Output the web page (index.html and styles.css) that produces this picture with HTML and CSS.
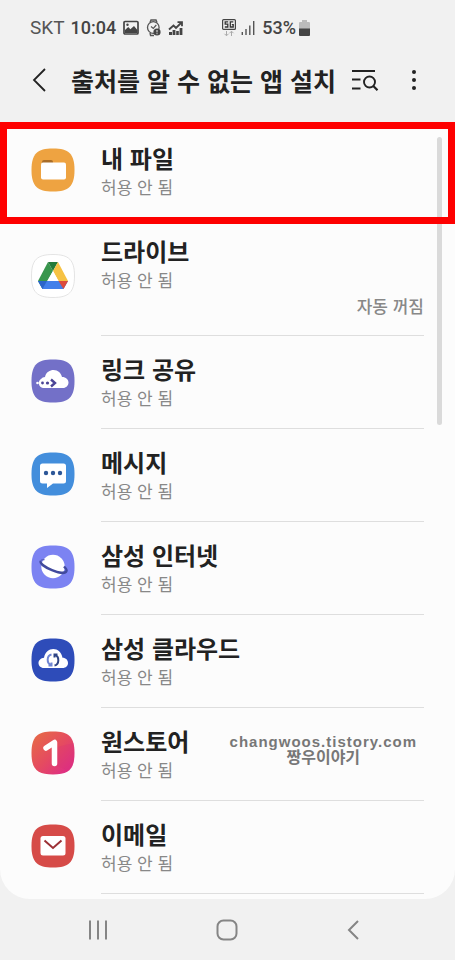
FILE: index.html
```html
<!DOCTYPE html>
<html lang="ko">
<head>
<meta charset="utf-8">
<meta name="viewport" content="width=device-width, initial-scale=1">
<title>출처를 알 수 없는 앱 설치</title>
<link rel="stylesheet" href="styles.css">
</head>
<body>
<div class="status">
  <span class="carrier">SKT</span>
  <span class="clock">10:04</span>
  <svg class="picture" width="16" height="16" viewBox="0 0 16 16"><rect x="1" y="1.5" width="14" height="12.5" rx="1" fill="none" stroke="#444" stroke-width="1.7"/><path d="M2 12V10l3.2-3 2.2 2.2L11 6l3.4 4v3H2z" fill="#444"/><circle cx="4.5" cy="4.7" r="1.2" fill="#444"/></svg>
  <svg class="watch" width="15" height="18" viewBox="0 0 15 18"><path d="M4 3.5 5 1h5l1 2.5M4 14l.6 2.5H8" fill="none" stroke="#555" stroke-width="1.4"/><circle cx="7.3" cy="8.5" r="5.8" fill="none" stroke="#555" stroke-width="1.3"/><path d="m5 7.5 2.3 2 3-3.5" fill="none" stroke="#555" stroke-width="1.2"/><circle cx="11" cy="13" r="3.6" fill="#444"/><path d="M11 11v2.4M11 14.2v1" stroke="#eee" stroke-width="1"/></svg>
  <svg class="chart" width="15" height="16" viewBox="0 0 15 16"><path d="M1 12h3v3H1zM4.6 10h2.8v5H4.6zM8.2 11h2.6v4H8.2zM11.6 8h2.8v7h-2.8z" fill="#444"/><path d="M1 9.5 5.5 5.5 8 8l5-5M9.5 2.2H14v4" fill="none" stroke="#444" stroke-width="1.8"/></svg>
  <svg class="network" width="14" height="18" viewBox="0 0 14 18"><rect x="0.600" y="0.600" width="12.800" height="9.800" rx="1" fill="#f1f1f1" stroke="#444" stroke-width="1.200"/><path d="M6.200 2.800H3.200v2.300h2.600v2.900H2.800M11.300 2.800H8.300V8h2.900V5.700H9.800" fill="none" stroke="#333" stroke-width="1.300"/><path d="M4.500 12v4.600m-2-1.800 2 2 2-2M9.500 17v-4.600m-2 1.800 2-2 2 2" fill="none" stroke="#aaa" stroke-width="1"/></svg>
  <svg class="signal" width="14" height="16" viewBox="0 0 14 16"><path d="M1.300 12v3M5 9v6M8.800 5.500V15M12.700 1v14" stroke="#555" stroke-width="1.400"/></svg>
  <span class="percent">53%</span>
  <svg class="battery" width="11" height="16" viewBox="0 0 11 16"><path d="M3 0h5v2h2q1 0 1 1v6H0V3q0-1 1-1h2z" fill="#bbb"/><path d="M0 8.500h11V15q0 1-1 1H1q-1 0-1-1z" fill="#444"/></svg>
</div>
<header class="bar">
  <button class="icon-button back" aria-label="뒤로"><svg width="16" height="26" viewBox="0 0 16 26"><path d="M13 2 2 13l11 11" fill="none" stroke="#222" stroke-width="1.800"/></svg></button>
  <h1>출처를 알 수 없는 앱 설치</h1>
  <button class="icon-button search" aria-label="검색"><svg width="28" height="22" viewBox="0 0 28 22"><path d="M1 2h23M1 10.500h8.500M1 19.500h8.500" stroke="#222" stroke-width="1.900"/><circle cx="18.500" cy="13" r="5.500" fill="none" stroke="#222" stroke-width="1.900"/><path d="m22.300 17 4.200 4.200" stroke="#222" stroke-width="2.200"/></svg></button>
  <button class="icon-button more" aria-label="옵션 더보기"><svg width="6" height="22" viewBox="0 0 6 22"><g fill="#222"><circle cx="3" cy="3" r="2"/><circle cx="3" cy="11" r="2"/><circle cx="3" cy="19" r="2"/></g></svg></button>
</header>
<main class="panel">
  <ul class="apps">
    <li class="highlight"><a class="app" href="#files">
      <svg class="app-icon" viewBox="0 0 44 44"><path fill="#eea341" d="M22 .5C38 .5 43.500 6 43.500 22S38 43.500 22 43.500.5 38 .5 22 6 .5 22 .5z"/><path d="M11 16v-2q0-2 2-2h7q2 0 2 2v2z" fill="#a96d28"/><rect x="10" y="14.500" width="25" height="17" rx="2" fill="#fff"/></svg>
      <span class="text"><span class="name">내 파일</span><span class="state">허용 안 됨</span></span></a></li>
    <li><a class="app" href="#drive">
      <svg class="app-icon" viewBox="0 0 44 44"><path fill="#fff" stroke="#ddd" stroke-width=".8" d="M22 .5C38 .5 43.500 6 43.500 22S38 43.500 22 43.500.5 38 .5 22 6 .5 22 .5z"/><path d="m17 8 5 9-10.500 18L7 27z" fill="#38964d"/><path d="M17 8h10l-5 9z" fill="#237a39"/><path d="M27 8 37 27H27.500L22 17z" fill="#f6c243"/><path d="M7 27h30l-4.500 8h-21z" fill="#4280ea"/><path d="M7 27h9l-4.500 8z" fill="#2c66c9"/><path d="M27.500 27H37l-4.500 8z" fill="#dc4b3d"/><path d="m22 17 5.500 10h-11z" fill="#fff"/></svg>
      <span class="text"><span class="name">드라이브</span><span class="state">허용 안 됨</span><span class="note">자동 꺼짐</span></span></a></li>
    <li><a class="app" href="#link">
      <svg class="app-icon" viewBox="0 0 44 44"><path fill="#7370c8" d="M22 .5C38 .5 43.500 6 43.500 22S38 43.500 22 43.500.5 38 .5 22 6 .5 22 .5z"/><path d="M12 29a5 5 0 0 1-2-9 5 5 0 0 1 4-2C15 13 19 11 22.500 11c4.500 0 7.500 3 8.500 7 4 0 6.500 2.500 6.500 5.500S35 29 32 29z" fill="#fff"/><circle cx="6.500" cy="24" r="1.300" fill="#fff"/><g fill="#4a4496"><circle cx="11.500" cy="24" r="1.400"/><circle cx="16.500" cy="24" r="1.600"/></g><path d="m20 20.500 4 3.500-4 3.500" fill="none" stroke="#4a4496" stroke-width="2.400"/></svg>
      <span class="text"><span class="name">링크 공유</span><span class="state">허용 안 됨</span></span></a></li>
    <li><a class="app" href="#messages">
      <svg class="app-icon" viewBox="0 0 44 44"><path fill="#438edc" d="M22 .5C38 .5 43.500 6 43.500 22S38 43.500 22 43.500.5 38 .5 22 6 .5 22 .5z"/><path d="M11.500 11.500h21q2.500 0 2.500 2.500v15q0 2.500-2.500 2.500H22L16 36v-4.500h-4.500Q9 31.500 9 29V14q0-2.500 2.500-2.500z" fill="#fff"/><g fill="#2d5798"><circle cx="15" cy="21" r="2.200"/><circle cx="22" cy="21" r="2.200"/><circle cx="29" cy="21" r="2.200"/></g></svg>
      <span class="text"><span class="name">메시지</span><span class="state">허용 안 됨</span></span></a></li>
    <li><a class="app" href="#internet">
      <svg class="app-icon" viewBox="0 0 44 44"><path fill="#7c83f2" d="M22 .5C38 .5 43.500 6 43.500 22S38 43.500 22 43.500.5 38 .5 22 6 .5 22 .5z"/><circle cx="22" cy="21.500" r="11.700" fill="#fff"/><path d="M9.500 16C8 21 33 32 35.500 26c.5-1-1-3-2.500-4.500" fill="none" stroke="#414a9d" stroke-width="2.400"/><path d="M9.500 16c.5-1 2-1.500 4-1.500" fill="none" stroke="#5b62bd" stroke-width="1.300"/></svg>
      <span class="text"><span class="name">삼성 인터넷</span><span class="state">허용 안 됨</span></span></a></li>
    <li><a class="app" href="#cloud">
      <svg class="app-icon" viewBox="0 0 44 44"><path fill="#2e4cb9" d="M22 .5C38 .5 43.500 6 43.500 22S38 43.500 22 43.500.5 38 .5 22 6 .5 22 .5z"/><path d="M13 30c-3.500 0-5.500-2.500-5.500-5 0-3 2.500-5 5.500-5.300C14 14 18 11 22.300 11S30.500 14 31.500 19.700c3.500 0 5.500 2.500 5.500 5.300s-2 5-5.500 5z" fill="#fff"/><path d="M20.500 16.500c-5 1-5 9-.5 10.500m-2.500.5h3v-3" fill="none" stroke="#6f85d3" stroke-width="2"/><path d="M23.500 27.500c5-1 5-9 .5-10.500m2.500-.5h-3v3" fill="none" stroke="#2e4485" stroke-width="2"/></svg>
      <span class="text"><span class="name">삼성 클라우드</span><span class="state">허용 안 됨</span></span></a></li>
    <li><a class="app" href="#onestore">
      <svg class="app-icon" viewBox="0 0 44 44"><defs><linearGradient id="store" x1="0" y1="0" x2="1" y2="1"><stop offset=".15" stop-color="#e6644c"/><stop offset=".5" stop-color="#e54b60"/><stop offset=".85" stop-color="#df3181"/></linearGradient></defs><path fill="url(#store)" d="M22 .5C38 .5 43.500 6 43.500 22S38 43.500 22 43.500.5 38 .5 22 6 .5 22 .5z"/><path d="M26 16 43 12v15q0 8-5 13L24 34z" fill="#d92f78" opacity=".25"/><path d="m15 17 8.500-5.500v21" fill="none" stroke="#fff" stroke-width="5.500" stroke-linecap="round" stroke-linejoin="round"/></svg>
      <span class="text"><span class="name">원스토어</span><span class="state">허용 안 됨</span></span></a>
      <p class="stamp"><span class="site">changwoos.tistory.com</span><span class="blog">짱우이야기</span></p></li>
    <li><a class="app" href="#email">
      <svg class="app-icon" viewBox="0 0 44 44"><path fill="#d64b48" d="M22 .5C38 .5 43.500 6 43.500 22S38 43.500 22 43.500.5 38 .5 22 6 .5 22 .5z"/><rect x="9.500" y="12" width="25" height="19.500" rx="2.500" fill="#fff"/><path d="m13.500 16.500 8.500 7.500 8.500-7.500" fill="none" stroke="#9c3035" stroke-width="2"/></svg>
      <span class="text"><span class="name">이메일</span><span class="state">허용 안 됨</span></span></a></li>
  </ul>
  <div class="thumb"></div>
</main>
<nav class="nav">
  <button class="icon-button" aria-label="최근 앱"><svg width="20" height="22" viewBox="0 0 20 22"><path d="M2 1.500v19M10 1.500v19M18 1.500v19" stroke="#858585" stroke-width="2"/></svg></button>
  <button class="icon-button" aria-label="홈"><svg width="22" height="22" viewBox="0 0 22 22"><rect x="1.500" y="1.500" width="19" height="19" rx="6" fill="none" stroke="#858585" stroke-width="2"/></svg></button>
  <button class="icon-button" aria-label="이전"><svg width="14" height="22" viewBox="0 0 14 22"><path d="M12 2 3 11l9 9" fill="none" stroke="#858585" stroke-width="2"/></svg></button>
</nav>
</body>
</html>
```
FILE: styles.css
```css
* { box-sizing: border-box; }

body {
  margin: 0;
  min-height: 100vh;
  display: flex;
  flex-direction: column;
  background: #f1f1f1;
  color: #222;
  font-family: "Noto Sans CJK KR", sans-serif;
}

.status {
  display: flex;
  align-items: center;
  height: 56px;
  padding: 0 30px;
  color: #444;
  font: 19px/24px Roboto, sans-serif;
}
.carrier { color: #555; margin-right: 6px; }
.clock, .percent {
  font-size: 18px;
  font-weight: 500;
}
.clock { margin-right: 7px; }
.picture, .watch { margin-right: 7px; }
.network { margin-left: 39px; margin-right: 5px; }
.signal { margin-right: 7px; }
.battery { margin-left: 3px; }

.bar {
  display: flex;
  align-items: center;
  height: 67px;
  padding: 0 38px 19px 32px;
}
.bar h1 {
  flex: 1;
  margin: 0;
  font-size: 25px;
  line-height: 36px;
  font-weight: 700;
  white-space: nowrap;
}

.icon-button {
  display: flex;
  padding: 0;
  border: 0;
  background: none;
}
.back { margin-right: 23px; }
.search { margin-right: 32px; }

.panel {
  position: relative;
  padding: 2px 0 5px;
  border-radius: 0 0 30px 30px;
  background: #fcfcfc;
}
.apps {
  margin: 0;
  padding: 0;
  list-style: none;
}
.apps li { position: relative; }
.app {
  display: flex;
  align-items: center;
  gap: 26px;
  padding: 0 31px;
  color: inherit;
  text-decoration: none;
}
.app-icon {
  flex: none;
  width: 44px;
  height: 44px;
  margin-bottom: 3px;
}
.text {
  flex: 1;
  display: flex;
  flex-direction: column;
  padding: 19px 0 17px;
  border-bottom: 1px solid #dedede;
}
.name {
  margin-bottom: 2px;
  font-size: 24px;
  line-height: 28px;
  font-weight: 700;
}
.state, .note {
  color: #888;
  font-size: 17px;
  line-height: 26px;
}
.note {
  line-height: 25px;
  font-weight: 500;
  text-align: right;
}

.highlight::after {
  content: "";
  position: absolute;
  z-index: 2;
  inset: -3px 0 -6px;
  border: 7px solid #fe0000;
  pointer-events: none;
}

.stamp {
  position: absolute;
  top: 26px;
  right: 38px;
  display: flex;
  flex-direction: column;
  align-items: center;
  margin: 0;
  color: #777;
  font-size: 15px;
  line-height: 15px;
  font-weight: 700;
}
.site {
  font-family: "Liberation Sans", sans-serif;
  letter-spacing: 1px;
}
.blog { font-size: 16px; }

.thumb {
  position: absolute;
  z-index: 1;
  top: 14px;
  right: 13px;
  width: 5px;
  height: 288px;
  border-radius: 3px;
  background: #dadada;
}

.nav {
  flex: 1;
  display: flex;
  align-items: center;
  justify-content: space-between;
  min-height: 60px;
  padding: 0 95px 0 88px;
}
```
